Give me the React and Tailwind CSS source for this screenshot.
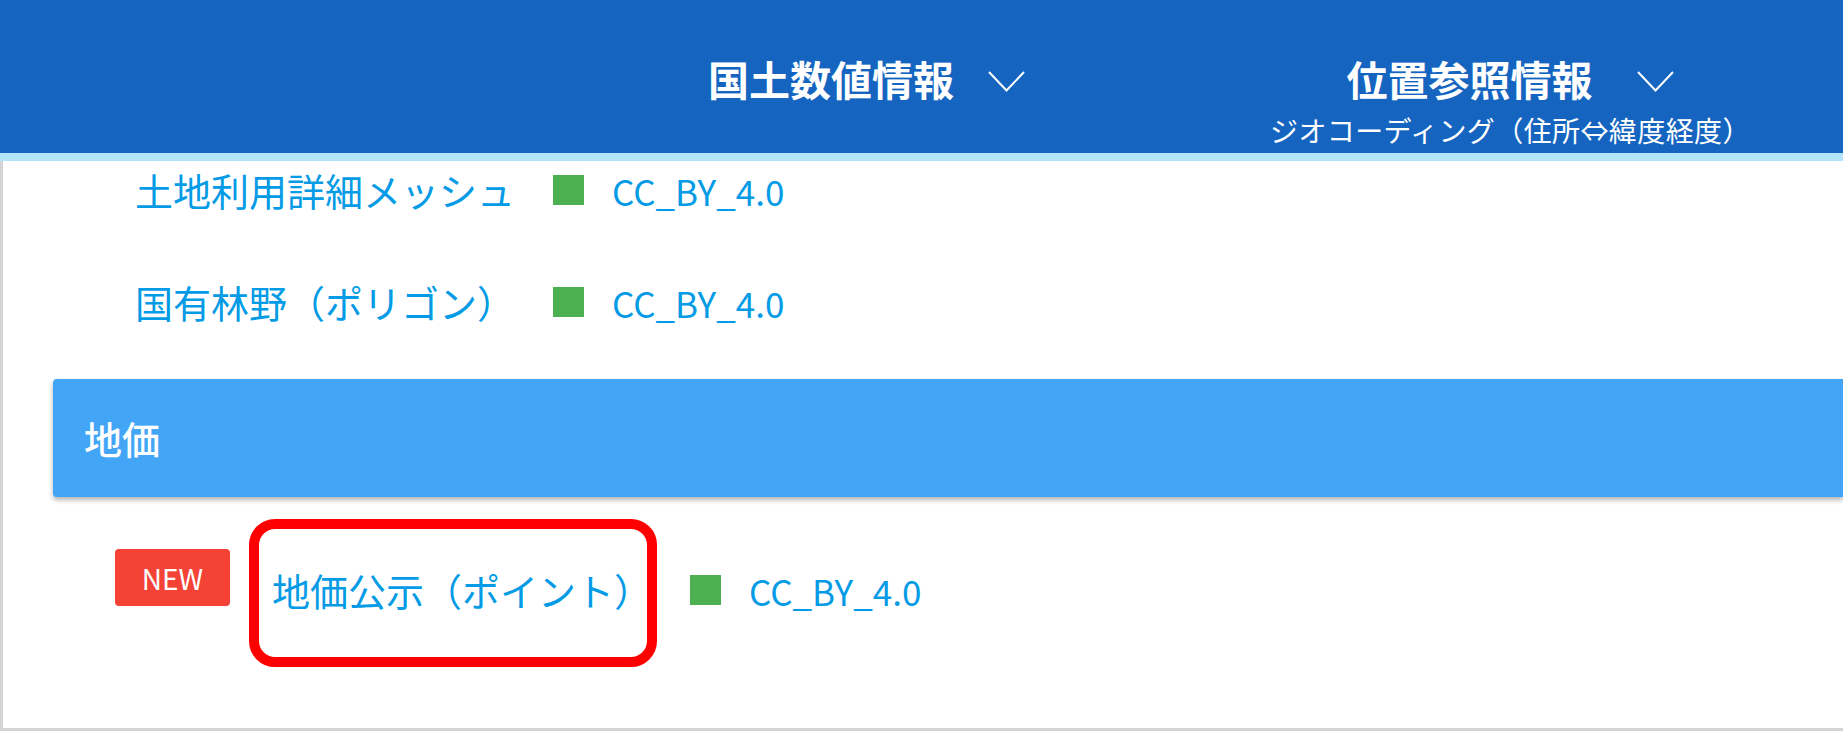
import React from "react";

const FONT = { fontFamily: '"Noto Sans CJK JP", "Noto Sans", sans-serif' };

function Chevron() {
  return (
    <svg width="37" height="21" viewBox="0 0 37 21" fill="none">
      <path d="M1 1 L18.5 19.5 L36 1" stroke="#ffffff" strokeWidth="2" />
    </svg>
  );
}

function License() {
  return (
    <>
      <span className="ml-[38px] inline-block w-[31px] h-[30px] bg-[#4caf50]" />
      <span className="ml-[28px] text-[35px] leading-none text-[#039be5]">
        CC_BY_4.0
      </span>
    </>
  );
}

function DataRow({ name, className = "" }) {
  return (
    <div className={`flex items-center h-[38px] pl-[132px] ${className}`}>
      <span className="text-[38px] leading-none text-[#039be5]">{name}</span>
      <License />
    </div>
  );
}

export default function App() {
  return (
    <div className="w-[1843px] h-[733px] bg-white overflow-hidden" style={FONT}>
      {/* top nav */}
      <header className="h-[161px] bg-[#1565c0] border-b-[8px] border-[#b3e5fc] flex items-start pl-[708px] pt-[58px] text-white">
        <div className="flex items-center h-[41px]">
          <span className="text-[41px] leading-none font-bold">国土数値情報</span>
          <span className="ml-[34px] mt-[6px]">
            <Chevron />
          </span>
        </div>
        <div className="ml-[245px] flex flex-col items-center">
          <div className="flex items-center h-[41px]">
            <span className="text-[41px] leading-none font-bold">位置参照情報</span>
            <span className="ml-[45px] mt-[6px]">
              <Chevron />
            </span>
          </div>
          <div className="mt-[17px] text-[28px] leading-none tracking-[0.4px]">
            ジオコーディング（住所⇔緯度経度）
          </div>
        </div>
      </header>

      {/* list card */}
      <main className="h-[570px] border-l-[3px] border-b-[3px] border-[#d4d4d4] pt-[10px]">
        <DataRow name="土地利用詳細メッシュ" />
        <DataRow name="国有林野（ポリゴン）" className="mt-[74px]" />

        <div className="mt-[58px] ml-[50px] h-[118px] bg-[#42a5f5] rounded-l-[4px] shadow-[0_3px_5px_rgba(0,0,0,0.3)] flex items-center pl-[31px]">
          <span className="text-[38px] leading-none font-medium text-white">地価</span>
        </div>

        <div className="mt-[52px] flex items-start pl-[112px]">
          <span className="w-[115px] h-[57px] rounded-[4px] bg-[#f44336] text-white text-[28px] leading-none flex items-center justify-center">
            NEW
          </span>
          <div className="ml-[42px] mt-[22px] flex items-center h-[38px]">
            <span className="relative text-[38px] leading-none text-[#039be5]">
              地価公示（ポイント）
              <span className="absolute -left-[23px] -top-[52px] w-[408px] h-[148px] border-[10px] border-[#ff0000] rounded-[26px]" />
            </span>
            <License />
          </div>
        </div>
      </main>
    </div>
  );
}
